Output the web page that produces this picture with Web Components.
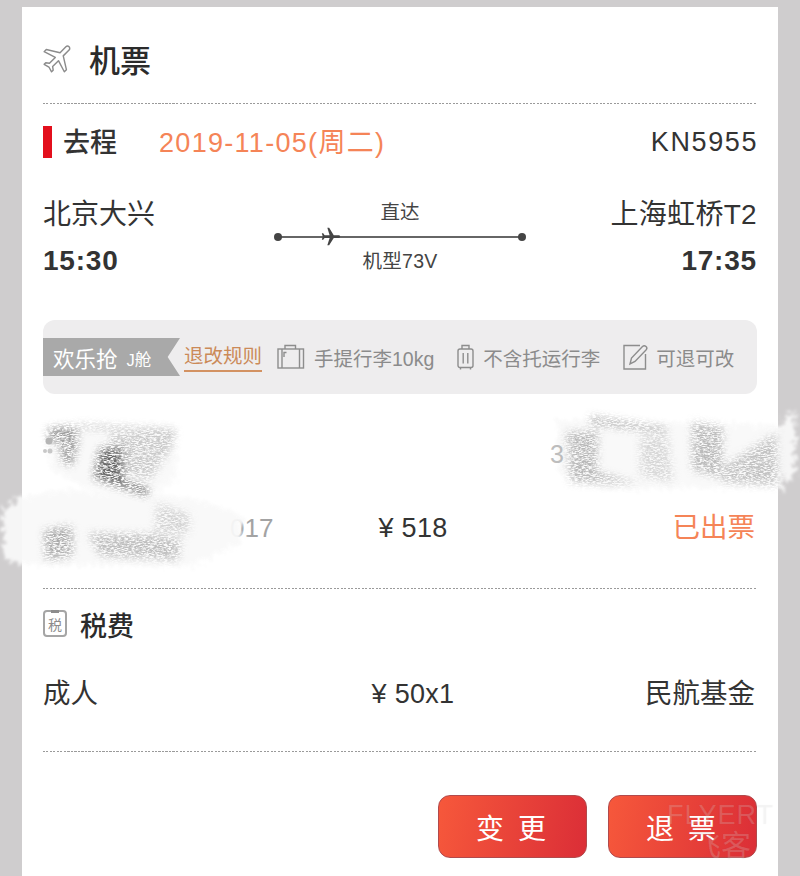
<!DOCTYPE html>
<html lang="zh">
<head>
<meta charset="utf-8">
<title>机票</title>
<style>
  html, body { margin: 0; height: 876px; overflow: hidden; background: #cfcdce; }
  body { font-family: "Liberation Sans", "Noto Sans CJK SC", sans-serif; color: #333; }
</style>
</head>
<body>
<ticket-page>
  <section-title icon="plane" size="31" height="96">机票</section-title>
  <dash-line></dash-line>
  <trip-head></trip-head>
  <flight-route></flight-route>
  <fare-tags>
    <tag-item icon="case">手提行李10kg</tag-item>
    <tag-item icon="bin">不含托运行李</tag-item>
    <tag-item icon="edit">可退可改</tag-item>
  </fare-tags>
  <price-row top="110" bottom="36" state="已出票" price="¥ 518"></price-row>
  <dash-line></dash-line>
  <section-title icon="tax" size="27" height="70">税费</section-title>
  <price-row top="11" bottom="33" label="成人" price="¥ 50x1" fee="民航基金"></price-row>
  <dash-line></dash-line>
  <action-bar>
    <action-button>变 更</action-button>
    <action-button>退 票</action-button>
  </action-bar>
</ticket-page>
<redact-marks></redact-marks>
<site-mark></site-mark>

<script>
const PLANE = 'M21 16v-2l-8-5V3.5c0-.83-.67-1.5-1.5-1.5S10 2.67 10 3.5V9l-8 5v2l8-2.5V19l-2 1.5V22l3.5-1 3.5 1v-1.5L13 19v-5.5l8 2.5z';

class Base extends HTMLElement {
  connectedCallback() {
    if (!this.shadowRoot) this.attachShadow({ mode: 'open' }).innerHTML = this.template;
  }
}

class TicketPage extends Base {
  get template() {
    return `
      <style>
        :host { display: block; margin: 7px 22px 0; height: 869px; padding: 0 21px; background: #fff; box-sizing: border-box; overflow: hidden; }
      </style>
      <slot></slot>
    `;
  }
}

class DashLine extends Base {
  get template() {
    return `<style>:host { display: block; height: 1px; background: repeating-linear-gradient(90deg, #9a9a9a 0 2px, transparent 2px 3.5px); }</style>`;
  }
}

class SectionTitle extends Base {
  get icon() {
    if (this.getAttribute('icon') === 'plane') {
      return `<svg width="36" height="36" viewBox="0 0 24 24"><path d="${PLANE}" transform="rotate(45 12 12)" fill="#fff" stroke="#8b8b8b" stroke-width=".95" stroke-linejoin="round"/></svg>`;
    }
    return `<span class="tax"><i></i>税</span>`;
  }
  get template() {
    const top = this.getAttribute('icon') === 'plane' ? 6 : 0;
    return `
      <style>
        :host { display: flex; align-items: center; box-sizing: border-box; padding-top: ${top}px; height: ${this.getAttribute('height')}px; font-size: ${this.getAttribute('size')}px; font-weight: 500; color: #2b2b2b; }
        svg { display: block; margin: 0 12px 0 -2px; flex: none; }
        .tax { position: relative; display: flex; align-items: center; justify-content: center; box-sizing: border-box; width: 24px; height: 27px; margin-right: 13px; margin-top: -1px; border: 2px solid #a5a5a5; border-radius: 4px; font-size: 14px; font-weight: 400; color: #8c8c8c; }
        .tax i { position: absolute; top: -2px; left: 6px; width: 8px; height: 3px; background: #8c8c8c; }
      </style>
      ${this.icon}<span><slot></slot></span>
    `;
  }
}

class TripHead extends Base {
  get template() {
    return `
      <style>
        :host { display: flex; align-items: center; height: 76px; font-size: 27px; }
        .bar { width: 9px; height: 32px; margin: 0 11px 0 0; background: #e30f1c; }
        .name { width: 96px; color: #333; font-weight: 500; margin-top: -3px; }
        .date { color: #f58457; letter-spacing: 1.3px; margin-top: -3px; }
        .no { margin-left: auto; letter-spacing: 1.6px; margin-right: -1px; color: #333; }
      </style>
      <span class="bar"></span>
      <span class="name">去程</span>
      <span class="date">2019-11-05(周二)</span>
      <span class="no">KN5955</span>
    `;
  }
}

class FlightRoute extends Base {
  get template() {
    return `
      <style>
        :host { display: grid; grid-template-columns: 1fr 244px 1fr; height: 140px; padding-top: 10px; box-sizing: border-box; font-size: 28px; color: #333; }
        .end { display: flex; flex-direction: column; gap: 6px; line-height: 40px; padding-top: 5px; }
        .end.right { align-items: flex-end; }
        .end.right span:first-child { letter-spacing: .3px; }
        .time { font-weight: 700; letter-spacing: .8px; line-height: 39px; }
        .mid { display: flex; flex-direction: column; align-items: center; font-size: 19.5px; color: #444; padding-top: 9px; }
        .mid span { line-height: 26px; }
        .line { position: relative; width: 100%; height: 2px; margin: 11px 0 10px; background: #666; }
        .line::before, .line::after { content: ""; position: absolute; top: -3px; width: 8px; height: 8px; border-radius: 50%; background: #444; }
        .line::before { left: -4px; }
        .line::after { right: -4px; }
        .line svg { position: absolute; left: 42px; top: -10px; }
      </style>
      <div class="end"><span>北京大兴</span><span class="time">15:30</span></div>
      <div class="mid">
        <span>直达</span>
        <div class="line"><svg width="22" height="22" viewBox="0 0 24 24"><path d="${PLANE}" transform="rotate(90 12 12)" fill="#444"/></svg></div>
        <span style="letter-spacing:.3px">机型73V</span>
      </div>
      <div class="end right"><span>上海虹桥T2</span><span class="time">17:35</span></div>
    `;
  }
}

class FareTags extends Base {
  get template() {
    return `
      <style>
        :host { display: flex; align-items: center; height: 74px; border-radius: 12px; background: #eeedee; }
        .ribbon { display: flex; align-items: center; box-sizing: border-box; width: 137px; height: 38px; padding-left: 10px; background: #a9a9a9; color: #fff; font-size: 21.5px; clip-path: polygon(0 0, 100% 0, 91% 50%, 100% 100%, 0 100%); }
        .ribbon small { font-size: 16.5px; margin-left: 9px; margin-top: 3px; }
        .rule { margin-left: 4px; margin-right: 15px; font-size: 19.5px; line-height: 27px; color: #cb8a58; border-bottom: 2px solid #d39262; }
      </style>
      <div class="ribbon">欢乐抢<small>J舱</small></div>
      <span class="rule">退改规则</span>
      <slot></slot>
    `;
  }
}

class TagItem extends Base {
  get icon() {
    const kind = this.getAttribute('icon');
    if (kind === 'case') {
      return `<svg width="28" height="26" viewBox="0 0 28 26" fill="none" stroke="#8d8d8d" stroke-width="1.4"><rect x="1" y="5" width="25.5" height="19"/><path d="M5 5V24M22.5 5V24M8 5V1.5H18.5V5M9.5 8.5H7V13"/></svg>`;
    }
    if (kind === 'bin') {
      return `<svg width="17" height="26" viewBox="0 0 17 26" fill="none" stroke="#8d8d8d" stroke-width="1.4"><rect x="1" y="5" width="15" height="18.5" rx="2"/><path d="M5 5V1.5H12V5M6.2 9V19.5M10.8 9V19.5M3.5 24V25.5M13.5 24V25.5"/></svg>`;
    }
    return `<svg width="25" height="26" viewBox="0 0 25 26" fill="none" stroke="#8d8d8d" stroke-width="1.4"><path d="M17 1.5H1V25H22.5V10"/><path d="M7 20L8.5 14L19.5 2.5C20.5 1.5 22 1.5 23 2.5C24 3.5 24 5 23 6L12 17.5Z"/></svg>`;
  }
  get template() {
    const kind = this.getAttribute('icon');
    return `
      <style>
        :host { display: flex; align-items: center; gap: ${kind === 'edit' ? 8 : 9}px; margin-left: ${kind === 'case' ? 0 : 23}px; font-size: 19.5px; color: #8b8b8b; white-space: nowrap; }
        svg { display: block; flex: none; }
      </style>
      ${this.icon}<span><slot></slot></span>
    `;
  }
}

class PriceRow extends Base {
  get template() {
    const a = n => this.getAttribute(n) || '';
    return `
      <style>
        :host { display: grid; grid-template-columns: 1fr auto 1fr; align-items: center; padding: ${a('top')}px 2px ${a('bottom')}px 0; font-size: 27.5px; color: #333; }
        div { height: 48px; line-height: 48px; }
        .mid { margin-left: 28px; letter-spacing: .3px; font-size: 27px; }
        .end { text-align: right; }
        .state { color: #f58457; }
      </style>
      <div>${a('label')}</div>
      <div class="mid">${a('price')}</div>
      <div class="end ${a('state') ? 'state' : ''}">${a('state') || a('fee')}</div>
    `;
  }
}

class ActionBar extends Base {
  get template() {
    return `
      <style>:host { display: flex; justify-content: flex-end; gap: 21px; margin-top: 43px; }</style>
      <slot></slot>
    `;
  }
}

class ActionButton extends Base {
  get template() {
    return `
      <style>
        :host { display: flex; align-items: center; justify-content: center; box-sizing: border-box; width: 149px; height: 63px; border: 1px solid #b14a4c; border-radius: 12px; background: linear-gradient(100deg, #f6583b, #db2e37); color: #fff; font-size: 28px; white-space: pre; }
        span { letter-spacing: 3px; }
      </style>
      <span><slot></slot></span>
    `;
  }
}

// painted-over account details, sits on top of the ticket
class RedactMarks extends Base {
  get template() {
    return `
      <style>
        :host { position: absolute; left: 0; top: 0; width: 800px; height: 876px; pointer-events: none; }
        svg { position: absolute; left: 0; top: 0; }
      </style>
      <svg width="800" height="876" viewBox="0 0 800 876">
        <defs>
          <filter id="scratch" x="0" y="0" width="800" height="876" filterUnits="userSpaceOnUse">
            <feTurbulence type="fractalNoise" baseFrequency=".28 1.1" numOctaves="3" seed="4" result="n"/>
            <feColorMatrix in="n" type="matrix" values="0 0 0 0 0  0 0 0 0 0  0 0 0 0 0  0 0 0 -3.6 2.4" result="m"/>
            <feGaussianBlur in="SourceGraphic" stdDeviation="4" result="b"/>
            <feComposite in="b" in2="m" operator="in"/>
          </filter>
          <filter id="edge" x="0" y="0" width="800" height="876" filterUnits="userSpaceOnUse">
            <feTurbulence type="fractalNoise" baseFrequency=".22" numOctaves="3" seed="9" result="n"/>
            <feDisplacementMap in="SourceGraphic" in2="n" scale="18"/>
            <feGaussianBlur stdDeviation="1.4"/>
          </filter>
        </defs>
        <text x="230" y="537" font-family="Liberation Sans" font-size="26" fill="#a3a3a3">017</text>
        <g filter="url(#edge)" fill="#f9f9f9" opacity=".94">
          <path d="M3 510L22 496L60 490L190 497L244 515L240 545L190 566L40 566L4 560Z"/>
          <path d="M557 420L780 425L795 408L795 470L782 488L700 488L600 490L556 470Z"/>
          <path d="M45 426L178 424L176 480L150 498L90 490L50 470Z"/>
        </g>
        <text x="550" y="463" font-family="Liberation Sans" font-size="25" fill="#bdbdbd">3</text>
        <g filter="url(#scratch)" opacity=".72">
          <path d="M48 428L76 426L78 442L72 466L62 462L60 444L48 440Z" fill="#777"/>
          <path d="M110 434L175 432L172 446L150 480L112 470Z" fill="#b8b8b8"/>
          <path d="M78 424L175 430L175 434L78 428Z" fill="#a8a8a8"/>
          <path d="M100 448L123 446L124 480L148 488L148 496L94 478Z" fill="#2e2e2e"/>
          <path d="M157 503L190 515L188 534L155 533Z" fill="#c4c4c4"/>
          <path d="M88 533L150 534L181 540L178 560L100 556Z" fill="#a8a8a8"/>
          <path d="M44 530L72 526L72 556L46 560Z" fill="#8c8c8c"/>
          <path d="M566 432L598 431L597 472L640 484L570 482Z" fill="#a0a0a0"/>
          <path d="M590 416L667 428L667 433L590 424Z" fill="#909090"/>
          <path d="M640 436L668 436L673 482L640 476Z" fill="#cacaca"/>
          <path d="M692 422L723 427L722 478L692 470Z" fill="#a4a4a4"/>
          <path d="M724 466L776 433L778 485L722 482Z" fill="#adadad"/>
        </g>
        <circle cx="49" cy="441" r="3.5" fill="#b5b5b5"/>
        <circle cx="45" cy="451" r="2" fill="#c8c8c8"/>
        <circle cx="50" cy="451" r="2.5" fill="#c8c8c8"/>
      </svg>
    `;
  }
}

class SiteMark extends Base {
  get template() {
    return `
      <style>
        :host { position: absolute; left: 667px; top: 800px; width: 125px; color: rgba(255,255,255,.16); text-shadow: 0 0 1px rgba(120,120,120,.1); pointer-events: none; }
        .en { font-size: 27px; line-height: 30px; letter-spacing: 1px; }
        .cn { font-size: 30px; line-height: 32px; margin-left: 24px; }
      </style>
      <div class="en">FLYERT</div>
      <div class="cn">飞客</div>
    `;
  }
}

customElements.define('ticket-page', TicketPage);
customElements.define('dash-line', DashLine);
customElements.define('section-title', SectionTitle);
customElements.define('trip-head', TripHead);
customElements.define('flight-route', FlightRoute);
customElements.define('fare-tags', FareTags);
customElements.define('tag-item', TagItem);
customElements.define('price-row', PriceRow);
customElements.define('action-bar', ActionBar);
customElements.define('action-button', ActionButton);
customElements.define('redact-marks', RedactMarks);
customElements.define('site-mark', SiteMark);
</script>
</body>
</html>
